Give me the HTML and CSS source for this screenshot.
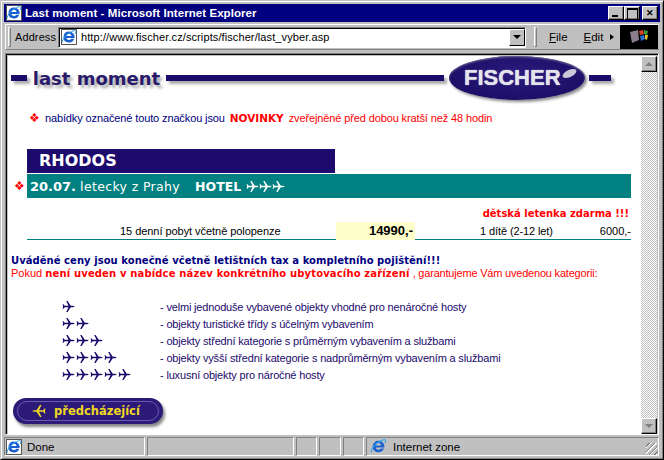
FILE: index.html
```html
<!DOCTYPE html>
<html lang="cs">
<head>
<meta charset="utf-8">
<title>Last moment - Microsoft Internet Explorer</title>
<link rel="stylesheet" href="styles.css">
</head>
<body>
<svg class="defs" width="0" height="0">
  <symbol id="plane" viewBox="0 0 14 12">
    <path d="M1 5.200h11L14 6l-2 .8H1zM4.500 0h1.500l3.500 5.200H7zM4.500 12h1.500l3.500-5.200H7zM.5 3.500h1L2.800 5.200H1zM.5 8.500h1L2.800 6.800H1z"/>
  </symbol>
  <symbol id="ie" viewBox="0 0 16 16">
    <path d="M8 2.500a5.500 5.500 0 1 0 5.200 7.300h-3a2.700 2.700 0 0 1-4.900-.8h8.200A5.500 5.500 0 0 0 8 2.500zM5.300 7a2.700 2.700 0 0 1 5.300 0z" fill="#1c5fd0"/>
    <path d="M1.500 13.500C.5 11 5 4 13.500 1.500c1.500 0 1.500 2 .8 3.500" fill="none" stroke="#2fa4e8" stroke-width="1"/>
  </symbol>
</svg>
<div class="window">
  <header class="titlebar">
    <span class="doc-icon"><svg class="ie-svg"><use href="#ie"/></svg></span>
    <span class="title">Last moment - Microsoft Internet Explorer</span>
    <span class="win-btns">
      <span class="win-btn min"></span><span class="win-btn max"></span><span class="win-btn close">✕</span>
    </span>
  </header>
  <div class="toolbar">
    <span class="grip"></span>
    <span class="addr-label">Address</span>
    <div class="addr-box">
      <span class="doc-icon small"><svg class="ie-svg"><use href="#ie"/></svg></span>
      <span class="url">http://www.fischer.cz/scripts/fischer/last_vyber.asp</span>
      <span class="combo"><i class="tri-down"></i></span>
    </div>
    <span class="grip second"></span>
    <span class="menu"><u>F</u>ile</span>
    <span class="menu edit"><u>E</u>dit</span>
    <i class="tri-right"></i>
    <span class="throbber">
      <svg class="flag" width="22" height="18" viewBox="0 0 22 18">
        <path d="M2 4l8-2 1 10-7 3z" fill="#8a7d8d"/>
        <path d="M11 3l4-1 1 4-4 1z" fill="#d9442b"/><path d="M16 2l4 1-1 4-3-1z" fill="#3f9a3f"/>
        <path d="M12 8l4-1 1 4-4 2z" fill="#2a6fd0"/><path d="M17 7l3 0-1 5-2-1z" fill="#e8c020"/>
      </svg>
    </span>
  </div>
  <div class="viewport">
    <main class="page">
      <div class="masthead">
        <span class="bar bar-a"></span>
        <span class="brand-title">last moment</span>
        <span class="bar bar-b"></span>
        <span class="logo"><span class="logo-text">FISCHER</span><i class="logo-mark"></i></span>
        <span class="bar bar-c"></span>
      </div>
      <p class="legend"><span class="diamond">❖</span><span class="navy">nabídky označené touto značkou jsou</span> <b class="novinky">NOVINKY</b> <span class="red">zveřejněné před dobou kratší než 48 hodin</span></p>
      <h1 class="region">RHODOS</h1>
      <div class="offer-row">
        <span class="diamond outer">❖</span>
        <div class="offer-band">
          <b class="date">20.07.</b><span class="route">letecky z Prahy</span><b class="hotel">HOTEL</b>
          <span class="planes white"><svg><use href="#plane"/></svg><svg><use href="#plane"/></svg><svg><use href="#plane"/></svg></span>
        </div>
      </div>
      <p class="free">dětská letenka zdarma !!!</p>
      <div class="price-row">
        <span class="stay">15 denní pobyt včetně polopenze</span>
        <b class="price">14990,-</b>
        <span class="child">1 dítě (2-12 let)</span>
        <span class="child-price">6000,-</span>
      </div>
      <p class="note navy-b">Uváděné ceny jsou konečné včetně letištních tax a kompletního pojištění!!!</p>
      <p class="note2"><span class="red">Pokud</span> <b class="red-b">není uveden v nabídce název konkrétního ubytovacího zařízení</b> <span class="red tail">, garantujeme Vám uvedenou kategorii:</span></p>
      <ul class="cats">
        <li><span class="planes"><svg><use href="#plane"/></svg></span><span>- velmi jednoduše vybavené objekty vhodné pro nenáročné hosty</span></li>
        <li><span class="planes"><svg><use href="#plane"/></svg><svg><use href="#plane"/></svg></span><span>- objekty turistické třídy s účelným vybavením</span></li>
        <li><span class="planes"><svg><use href="#plane"/></svg><svg><use href="#plane"/></svg><svg><use href="#plane"/></svg></span><span>- objekty střední kategorie s průměrným vybavením a službami</span></li>
        <li><span class="planes"><svg><use href="#plane"/></svg><svg><use href="#plane"/></svg><svg><use href="#plane"/></svg><svg><use href="#plane"/></svg></span><span>- objekty vyšší střední kategorie s nadprůměrným vybavením a službami</span></li>
        <li><span class="planes"><svg><use href="#plane"/></svg><svg><use href="#plane"/></svg><svg><use href="#plane"/></svg><svg><use href="#plane"/></svg><svg><use href="#plane"/></svg></span><span>- luxusní objekty pro náročné hosty</span></li>
      </ul>
      <a class="prev"><svg class="prev-plane" viewBox="0 0 14 12"><use href="#plane"/></svg><span>předcházející</span></a>
    </main>
    <aside class="scrollbar">
      <span class="sb-btn"><i class="sb-up"></i></span>
      <span class="sb-track"></span>
      <span class="sb-btn"><i class="sb-down"></i></span>
    </aside>
  </div>
  <footer class="status">
    <span class="cell done"><span class="doc-icon small"><svg class="ie-svg"><use href="#ie"/></svg></span>Done</span>
    <span class="cell wide"></span>
    <span class="cell tiny"></span>
    <span class="cell tiny mid"></span>
    <span class="cell tiny"></span>
    <span class="cell zone"><svg class="zone-ie"><use href="#ie"/></svg>Internet zone<i class="resize"></i></span>
  </footer>
</div>
</body>
</html>
```

FILE: styles.css
```css
* { box-sizing: border-box; }
html, body { margin: 0; padding: 0; }
body { width: 664px; height: 460px; overflow: hidden; font-family: "Liberation Sans", Arial, sans-serif; font-size: 11px; background: #c0c0c0; }
.defs { position: absolute; }
.window { width: 664px; height: 460px; display: flex; flex-direction: column; padding: 4px 4px 3px; background: #c0c0c0; border: 1px solid; border-color: #c0c0c0 #000 #000 #c0c0c0; box-shadow: inset 1px 1px 0 #fff, inset -1px -1px 0 #808080; }
.titlebar { height: 18px; margin: -1px -1px 0; background: #000080; color: #fff; display: flex; align-items: center; padding-left: 2px; flex: none; }
.title { font-family: "Liberation Sans", sans-serif; font-weight: 700; font-size: 11.500px; margin-left: 3px; white-space: nowrap; letter-spacing: .07px; }
.doc-icon { width: 16px; height: 16px; background: #fff; display: inline-block; flex: none; box-shadow: inset 0 0 0 1px #555; }
.ie-svg { width: 16px; height: 16px; display: block; }
.win-btns { margin-left: auto; display: flex; margin-right: 2px; }
.win-btn { width: 16px; height: 14px; background: #c0c0c0; border: 1px solid; border-color: #fff #000 #000 #fff; box-shadow: inset -1px -1px 0 #808080; color: #000; font-size: 9px; line-height: 12px; text-align: center; position: relative; }
.win-btn.close { margin-left: 2px; font-weight: 700; }
.win-btn.min::after { content: ""; position: absolute; left: 3px; bottom: 2px; width: 6px; height: 2px; background: #000; }
.win-btn.max::after { content: ""; position: absolute; left: 2px; top: 1px; width: 9px; height: 9px; border: 1px solid #000; border-top-width: 2px; }
.toolbar { height: 26px; margin-top: 2px; display: flex; align-items: center; flex: none; border: 1px solid; border-color: #fff #808080 #808080 #fff; border-width: 1px 0 1px 1px; }
.grip { width: 3px; height: 20px; margin-left: 2px; border: 1px solid; border-color: #fff #808080 #808080 #fff; flex: none; }
.addr-label { margin-left: 4px; font-size: 11px; letter-spacing: .1px; color: #000; width: 38px; flex: none; }
.addr-box { width: 468px; height: 21px; margin-left: 5px; background: #fff; border: 1px solid; border-color: #808080 #fff #fff #808080; box-shadow: inset 1px 1px 0 #000; display: flex; align-items: center; padding-left: 2px; flex: none; }
.url { font-size: 11px; letter-spacing: .1px; margin-left: 4px; color: #000; white-space: nowrap; }
.combo { margin-left: auto; width: 16px; height: 17px; background: #c0c0c0; border: 1px solid; border-color: #fff #000 #000 #fff; display: flex; align-items: center; justify-content: center; }
.tri-down { width: 0; height: 0; border: 4px solid transparent; border-top: 4px solid #000; border-bottom: 0; }
.grip.second { margin-left: 8px; }
.menu { font-size: 11.500px; color: #000; margin-left: 12px; }
.menu.edit { margin-left: 16px; }
.tri-right { width: 0; height: 0; margin-left: 7px; border: 3px solid transparent; border-left: 4px solid #000; border-right: 0; }
.throbber { margin-left: auto; margin-right: 1px; width: 38px; height: 24px; background: #000; display: flex; align-items: center; justify-content: center; flex: none; }
.flag { filter: blur(.5px); }
.viewport { flex: 1; min-height: 0; margin-top: 3px; display: flex; border: 1px solid; border-color: #808080 #fff #fff #808080; box-shadow: inset 1px 1px 0 #000; padding: 2px 0 0 2px; }
.page { flex: 1; min-width: 0; background: #fff; padding: 0 0 0 3px; overflow: hidden; }
.scrollbar { width: 16px; margin-right: 1px; display: flex; flex-direction: column; }
.sb-btn { height: 16px; background: #c0c0c0; border: 1px solid; border-color: #fff #000 #000 #fff; box-shadow: inset -1px -1px 0 #808080; display: flex; align-items: center; justify-content: center; flex: none; }
.sb-track { flex: 1; background-color: #fff; background-image: conic-gradient(#c0c0c0 25%, #fff 0 50%, #c0c0c0 0 75%, #fff 0); background-size: 2px 2px; }
.sb-up, .sb-down { width: 0; height: 0; border: 4px solid transparent; }
.sb-up { border-bottom: 4px solid #808080; border-top: 0; }
.sb-down { border-top: 4px solid #808080; border-bottom: 0; }
.masthead { display: flex; align-items: center; height: 44px; width: 600px; }
.bar { height: 6px; background: #1c0a6c; box-shadow: 3px 3px 3px #aaa; flex: none; }
.bar-a { width: 16px; }
.bar-b { width: 278px; }
.bar-c { width: 22px; margin-left: 4px; }
.brand-title { width: 139px; text-align: center; font-family: "DejaVu Sans", sans-serif; font-weight: 700; font-size: 18px; color: #2a1a6c; text-shadow: 3px 3px 3px #aaa; white-space: nowrap; }
.logo { width: 136px; height: 44px; border-radius: 50%; background: radial-gradient(ellipse at 50% 40%, #2a1a7c, #180a60); box-shadow: 2px 2px 3px #888, inset 0 1px 2px #6a6a90; display: flex; align-items: center; padding-left: 15px; flex: none; margin-left: 5px; }
.logo-text { font-family: "Liberation Sans", sans-serif; font-weight: 700; font-size: 22px; color: #e4e4ec; text-shadow: 0 0 1px #fff; }
.logo-mark { width: 15px; height: 7px; margin-left: 1px; background: #c8c8d8; border-radius: 50%; transform: rotate(-25deg); margin-top: -10px; flex: none; }
.legend { margin: 11px 0 0 18px; height: 14px; line-height: 14px; white-space: nowrap; letter-spacing: -.12px; }
.diamond { color: #f00; font-size: 12px; margin-right: 5px; }
.navy { color: #000080; }
.red { color: #f00; }
.novinky { color: #f00; font-family: "DejaVu Sans", sans-serif; font-size: 10.500px; margin: 0 2px; letter-spacing: 0; }
.region { margin: 24px 0 0 16px; width: 308px; height: 24px; background: #1c0a6c; color: #fff; font-family: "DejaVu Sans", sans-serif; font-size: 16px; line-height: 24px; padding-left: 12px; font-weight: 700; }
.offer-row { display: flex; align-items: center; margin: 1px 0 0 1px; }
.diamond.outer { width: 15px; margin: 0; text-align: center; }
.offer-band { width: 604px; height: 24px; background: #008080; color: #fff; display: flex; align-items: center; padding-left: 3px; white-space: nowrap; }
.date { font-family: "DejaVu Sans", sans-serif; font-size: 13px; }
.route { font-family: "DejaVu Sans", sans-serif; font-size: 12.500px; letter-spacing: .35px; margin-left: 4px; }
.hotel { font-family: "DejaVu Sans", sans-serif; font-size: 12.500px; margin-left: 15px; }
.planes { display: inline-flex; gap: 1px; color: #1c0a6c; fill: currentColor; }
.planes svg { width: 13px; height: 11px; display: block; }
.planes.white { color: #fff; margin-left: 5px; gap: 0; }
.free { margin: 9px 0 0; width: 618px; text-align: right; color: #f00; font-family: "DejaVu Sans", sans-serif; font-weight: 700; font-size: 10px; line-height: 14px; }
.price-row { display: flex; height: 18px; width: 604px; margin: 1px 0 0 16px; border-bottom: 1px solid #008080; align-items: center; line-height: 18px; color: #000; white-space: nowrap; }
.stay { margin-left: 93px; width: 216px; flex: none; letter-spacing: -.05px; }
.price { width: 79px; background: #ffffcc; text-align: right; font-family: "Liberation Sans", sans-serif; font-size: 13px; flex: none; padding-right: 2px; }
.child { margin-left: 65px; width: 116px; flex: none; letter-spacing: -.1px; }
.child-price { margin-left: auto; }
.note { margin: 14px 0 0; }
.navy-b { color: #000080; font-family: "DejaVu Sans", sans-serif; font-weight: 700; font-size: 10px; letter-spacing: .05px; line-height: 13px; white-space: nowrap; }
.note2 { margin: 0; line-height: 13px; white-space: nowrap; }
.red-b { color: #f00; font-family: "DejaVu Sans", sans-serif; font-size: 10px; letter-spacing: .15px; }
.tail { letter-spacing: -.2px; }
.cats { list-style: none; margin: 18px 0 0 51px; padding: 0; color: #1c0a6c; letter-spacing: -.17px; }
.cats li { display: flex; height: 17px; align-items: center; white-space: nowrap; }
.cats .planes { width: 98px; flex: none; }
.prev { display: flex; align-items: center; width: 150px; height: 26px; margin: 15px 0 0 2px; border-radius: 13px; background: #2c1a78; box-shadow: 2px 3px 3px #888; color: #f0d820; font-family: "DejaVu Sans", sans-serif; font-weight: 700; font-size: 11.500px; position: relative; }
.prev::before { content: ""; position: absolute; inset: 3px 4px; border: 1px solid #6a5ab0; border-radius: 10px; }
.prev-plane { width: 14px; height: 12px; margin: 0 8px 0 19px; fill: #f0d820; transform: scaleX(-1); }
.status { height: 19px; margin-top: 2px; display: flex; flex: none; gap: 2px; }
.cell { height: 19px; border: 1px solid; border-color: #808080 #fff #fff #808080; display: flex; align-items: center; color: #000; flex: none; font-size: 11.500px; }
.cell.done { width: 141px; padding-left: 1px; gap: 5px; margin-left: -1px; }
.cell.wide { width: 147px; }
.cell.tiny { width: 21px; }
.cell.mid { width: 22px; }
.cell.zone { flex: 1; padding-left: 3px; position: relative; gap: 6px; font-size: 11.500px; }
.zone-ie { width: 17px; height: 17px; }
.resize { position: absolute; right: 0; bottom: 0; width: 12px; height: 12px; background: repeating-linear-gradient(135deg, transparent 0 2px, #808080 2px 3px, #fff 3px 4px); }
```
